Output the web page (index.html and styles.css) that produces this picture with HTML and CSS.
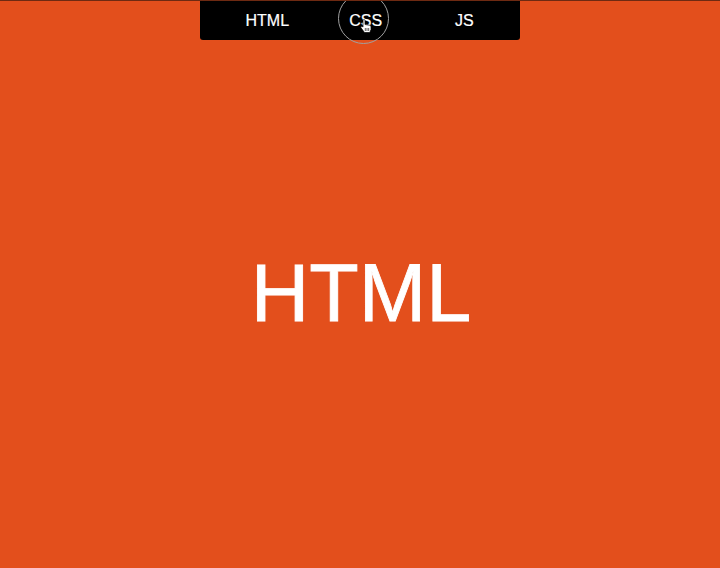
FILE: index.html
```html
<!DOCTYPE html>
<html lang="en">
<head>
    <meta charset="UTF-8">
    <meta name="viewport" content="width=device-width, initial-scale=1.0">
    <title>HTML / CSS / JS</title>
    <link rel="stylesheet" href="styles.css">
</head>
<body>

<nav class="tabs">
    <a class="tab">HTML</a>
    <a class="tab tab-hover">CSS
        <span class="ring"></span>
        <svg class="cursor" width="12" height="14" viewBox="0 0 12 14">
            <path d="M3 1.500C3 .3 5 .3 5 1.500V5.500L9.500 6.200C10.500 6.400 11 7 11 8V10.500L9.800 13.500H4.500L1 8.800C.4 7.800 1.600 6.800 2.400 7.500L3 8.100Z" fill="#fff" stroke="#000" stroke-width=".7"/>
            <path d="M5.300 9V12M7 9V12M8.700 9V12" stroke="#333" stroke-width=".8" fill="none"/>
        </svg>
    </a>
    <a class="tab">JS</a>
</nav>

<main class="panel">
    <h1 class="panel-title">HTML</h1>
</main>

</body>
</html>
```

FILE: styles.css
```css
* {
    box-sizing: border-box;
}

html, body {
    height: 100%;
}

body {
    margin: 0;
    overflow: hidden;
    display: flex;
    flex-direction: column;
    align-items: center;
    background-color: #e34f1c;
    border-top: 1px solid #6e2a12;
    font-family: "Liberation Sans", Arial, sans-serif;
    color: #fff;
}

.tabs {
    display: grid;
    grid-template-columns: repeat(3, 98.5px);
    width: 320px;
    height: 39px;
    padding-left: 18px;
    background-color: #000;
    border-radius: 0 0 3px 3px;
    flex-shrink: 0;
}

.tab {
    position: relative;
    display: flex;
    justify-content: center;
    align-items: center;
    font-size: 16px;
    -webkit-text-stroke: 0.2px #fff;
}

.ring {
    position: absolute;
    left: 21px;
    top: -8px;
    width: 51px;
    height: 51px;
    border: 1.5px solid #a0a0a0;
    border-radius: 50%;
}

.cursor {
    position: absolute;
    left: 43px;
    top: 18px;
}

.panel {
    flex: 1;
    display: flex;
    justify-content: center;
    align-items: center;
    padding: 0 0 22px 2px;
}

.panel-title {
    margin: 0;
    font-size: 81px;
    font-weight: normal;
    -webkit-text-stroke: 0.8px #fff;
}
```
